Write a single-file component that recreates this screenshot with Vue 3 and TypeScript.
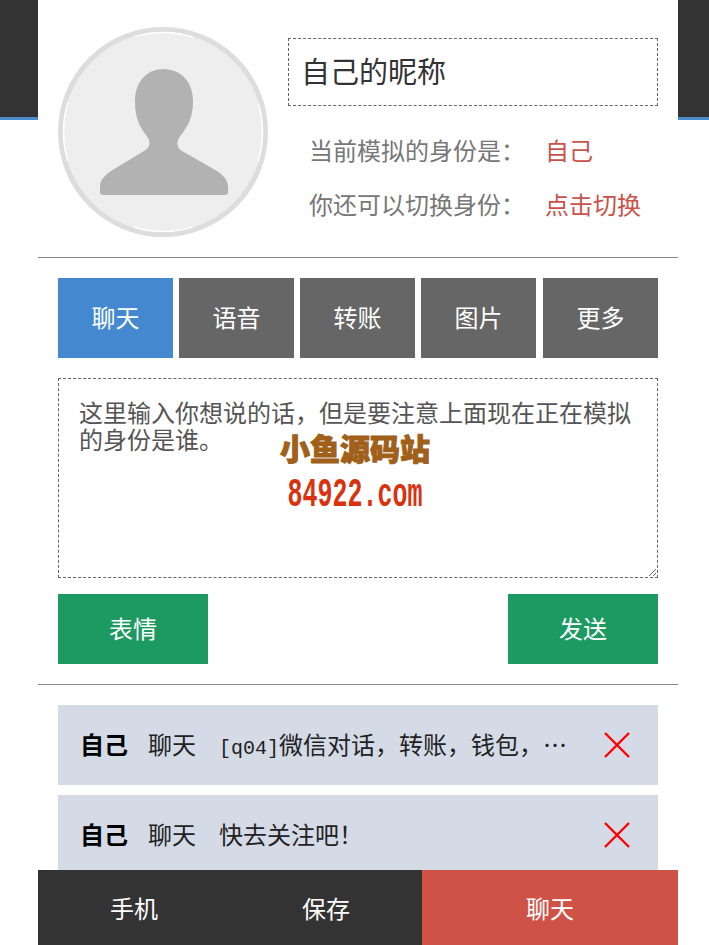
<template>
  <div class="page">
    <div class="gutter"><div class="sideBlock"></div></div>

    <main class="main">
      <!-- profile header -->
      <section class="profile">
        <svg class="avatar" viewBox="0 0 210 210" aria-label="avatar">
          <circle cx="105" cy="105" r="102.5" fill="#eee" stroke="#ddd" stroke-width="5" />
          <circle
            cx="105"
            cy="105"
            r="99.5"
            fill="none"
            stroke="#fff"
            stroke-width="1.5"
            stroke-dasharray="60 96.3"
            stroke-dashoffset="30"
          />
          <path
            fill="#b2b2b2"
            d="M105 42C124 42 135 56 135 74C135 92 129 100 123 108C118 114 118 120 124 124L159 144C166 149 170 153 170 160L170 165Q170 168 167 168L45 168Q42 168 42 165L42 160C42 153 46 149 53 144L86 124C93 120 93 114 88 108C82 100 77 92 77 74C77 56 88 42 105 42Z"
          />
        </svg>
        <div class="identity">
          <div class="nickname">自己的昵称</div>
          <div class="infoRow">
            <span class="infoLabel">当前模拟的身份是：</span>
            <span class="infoValue">自己</span>
          </div>
          <div class="infoRow">
            <span class="infoLabel">你还可以切换身份：</span>
            <span class="infoValue">点击切换</span>
          </div>
        </div>
      </section>

      <hr class="divider" />

      <!-- composer -->
      <section class="composer">
        <div class="tabs">
          <button
            v-for="tab in tabs"
            :key="tab"
            class="tab"
            :class="{ active: tab === activeTab }"
            @click="activeTab = tab"
          >
            {{ tab }}
          </button>
        </div>
        <textarea v-model="draft" class="input"></textarea>
        <div class="actions">
          <button class="action">表情</button>
          <button class="action">发送</button>
        </div>
      </section>

      <hr class="divider" />

      <!-- sent messages -->
      <section class="messages">
        <div v-for="msg in messages" :key="msg.id" class="message">
          <span class="who">{{ msg.who }}</span>
          <span class="kind">{{ msg.kind }}</span>
          <span class="text"><span v-if="msg.tag" class="tag">{{ msg.tag }}</span>{{ msg.text }}</span>
          <svg class="remove" viewBox="0 0 28 28" aria-label="remove">
            <path d="M2 2L26 26M26 2L2 26" stroke="#f00" stroke-width="2.4" fill="none" />
          </svg>
        </div>
      </section>

      <!-- watermark sits over the textarea -->
      <div class="watermark">
        <div class="markName">小鱼源码站</div>
        <div class="markUrl">84922.com</div>
      </div>

      <nav class="bottomBar">
        <button class="barItem">手机</button>
        <button class="barItem">保存</button>
        <button class="barItem current">聊天</button>
      </nav>
    </main>

    <div class="gutter"><div class="sideBlock"></div></div>
  </div>
</template>

<script setup lang="ts">
import { ref } from 'vue'

interface SentMessage {
  id: number
  who: string
  kind: string
  tag?: string
  text: string
}

const tabs = ['聊天', '语音', '转账', '图片', '更多']
const activeTab = ref('聊天')
const draft = ref('这里输入你想说的话，但是要注意上面现在正在模拟的身份是谁。')

const messages: SentMessage[] = [
  { id: 1, who: '自己', kind: '聊天', tag: '[q04]', text: '微信对话，转账，钱包，⋯' },
  { id: 2, who: '自己', kind: '聊天', text: '快去关注吧！' },
]
</script>

<style>
html,
body {
  margin: 0;
  background: #fff;
}
</style>

<style scoped>
.page {
  display: grid;
  grid-template-columns: 38px 640px 31px;
  height: 945px;
  overflow: hidden;
  font-family: 'Liberation Serif', 'Noto Sans CJK SC', serif;
}

.sideBlock {
  height: 117px;
  background: #333;
  border-bottom: 3px solid #4a8bcb;
}

.main {
  position: relative;
  height: 945px;
  overflow: hidden;
  background: #fff;
}

button {
  font-family: inherit;
  border: none;
  padding: 0;
  color: #fff;
  cursor: pointer;
}

.profile {
  display: flex;
  gap: 20px;
  height: 257px;
  box-sizing: border-box;
  padding: 27px 20px 0;
}

.avatar {
  width: 210px;
  height: 210px;
  flex: none;
}

.identity {
  flex: 1;
  padding-top: 11px;
}

.nickname {
  height: 68px;
  box-sizing: border-box;
  margin-bottom: 19px;
  border: 1px dashed #666;
  padding-left: 12px;
  font-size: 29px;
  line-height: 69px;
  color: #333;
}

.infoRow {
  display: flex;
  height: 54px;
  padding-left: 21px;
  font-size: 24px;
  line-height: 54px;
}

.infoLabel {
  width: 236px;
  color: #777;
}

.infoValue {
  color: #c9524a;
}

.divider {
  height: 1px;
  margin: 0;
  border: none;
  background: #888;
}

.composer {
  display: flex;
  flex-direction: column;
  padding: 20px 20px 20px;
}

.tabs {
  display: grid;
  grid-template-columns: repeat(4, 115px) 116px;
  column-gap: 6px;
  height: 80px;
}

.tab {
  padding-bottom: 3px;
  background: #666;
  font-size: 24px;
}

.tab:last-child {
  margin-left: 1px;
}

.tab.active {
  background: #4488cf;
}

.input {
  display: block;
  width: 600px;
  height: 200px;
  box-sizing: border-box;
  margin-top: 20px;
  padding: 22px 20px;
  border: 1px dashed #666;
  border-radius: 0;
  outline: none;
  font-family: inherit;
  font-size: 24px;
  line-height: 27px;
  color: #555;
}

.actions {
  display: flex;
  justify-content: space-between;
  margin-top: 16px;
}

.action {
  width: 150px;
  height: 70px;
  padding-bottom: 3px;
  background: #1d9a62;
  font-size: 24px;
}

.messages {
  display: flex;
  flex-direction: column;
  gap: 10px;
  padding: 20px 20px 0;
}

.message {
  display: flex;
  align-items: center;
  height: 80px;
  flex: none;
  box-sizing: border-box;
  padding: 0 0 3px 22px;
  background: #d4dae6;
  font-size: 24px;
  color: #222;
}

.who {
  width: 68px;
  flex: none;
  font-weight: 700;
  color: #000;
}

.kind {
  width: 71px;
  flex: none;
}

.text {
  width: 348px;
  flex: none;
  white-space: nowrap;
}

.tag {
  font-family: 'Liberation Mono', monospace;
  font-size: 20px;
}

.remove {
  width: 28px;
  height: 28px;
  flex: none;
  margin: 3px 0 0 36px;
}

.watermark {
  position: absolute;
  top: 432px;
  left: 242px;
  width: 150px;
  text-align: center;
}

.markName {
  font-size: 30px;
  line-height: 36px;
  font-weight: 900;
  color: #a0601a;
  white-space: nowrap;
  -webkit-text-stroke: 1px #a0601a;
}

.markUrl {
  margin-top: 10px;
  font-family: 'Liberation Mono', monospace;
  font-size: 25px;
  line-height: 36px;
  font-weight: 700;
  color: #d9320f;
  transform: scaleY(1.6);
}

.bottomBar {
  position: absolute;
  left: 0;
  bottom: 0;
  display: grid;
  grid-template-columns: 192px 192px 256px;
  width: 640px;
  height: 75px;
  background: #333;
}

.barItem {
  background: transparent;
  font-size: 24px;
}

.barItem.current {
  background: #cf5247;
}
</style>
